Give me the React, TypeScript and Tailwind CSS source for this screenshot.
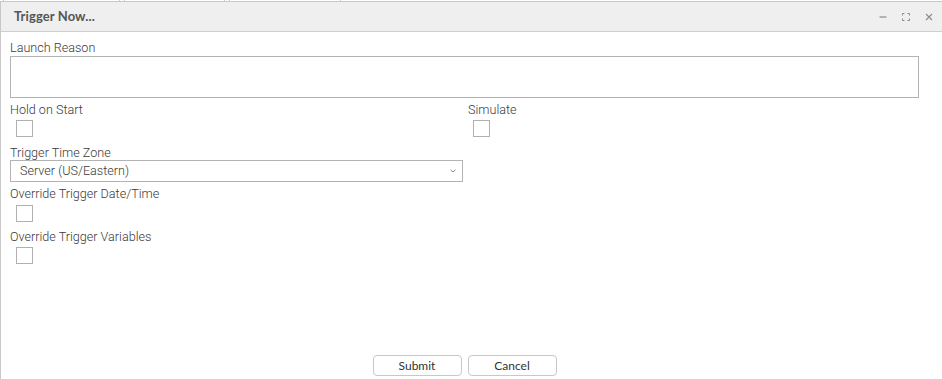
import React from "react";

const labelCls = "block text-[12.6px] leading-[14px] font-light text-[#3a3a3a]";

function Box() {
  return <div className="w-[17px] h-[17px] border border-[#b0b0b0] bg-white ml-[6px] mt-[3px]" />;
}

export default function App() {
  return (
    <div className="w-[942px] h-[379px] bg-white flex flex-col overflow-hidden" style={{ fontFamily: "Roboto, 'Liberation Sans', sans-serif" }}>
      {/* sliver of the page behind the dialog */}
      <div className="flex h-px bg-white">
        <div className="w-[4px] border-r border-[#ccc]" />
        <div className="w-[116px] border-r border-[#ccc]" />
        <div className="w-[5px] border-r border-[#ccc]" />
        <div className="w-[100px] border-r border-[#ccc]" />
        <div className="w-[5px] border-r border-[#ccc]" />
        <div className="w-[111px] border-r border-[#ccc]" />
      </div>

      <div className="flex-1 flex flex-col border-l border-t border-[#c8c8c8]">
        {/* Header */}
        <div className="h-[30px] bg-[#efefef] border-b border-[#cfcfcf] flex items-center pl-[13px] pr-[9px]">
          <span className="text-[13px] font-bold text-[#555] tracking-[0.1px]" style={{ fontFamily: "Lato, 'Liberation Sans', sans-serif" }}>
            Trigger Now...
          </span>
          <div className="ml-auto flex items-center gap-[15px] text-[#8a8a8a]">
            <svg width="8" height="8" viewBox="0 0 8 8"><path d="M0.5 4h7" stroke="currentColor" strokeWidth="1.2" /></svg>
            <svg width="8" height="8" viewBox="0 0 8 8" fill="none" stroke="currentColor" strokeWidth="1">
              <path d="M0.5 2.5v-2h2M5.5 0.5h2v2M7.5 5.5v2h-2M2.5 7.5h-2v-2" />
            </svg>
            <svg width="8" height="8" viewBox="0 0 8 8" stroke="currentColor" strokeWidth="1.1"><path d="M1 1l6 6M7 1l-6 6" /></svg>
          </div>
        </div>

        {/* Body */}
        <div className="flex-1 flex flex-col pl-[9px] pr-[23px] pt-[9px]">
          <label className={labelCls}>Launch Reason</label>
          <textarea className="block mt-[1px] h-[42px] w-full border border-[#b3b3b3] resize-none outline-none" />

          <div className="grid grid-cols-[453px_1fr] gap-[5px] mt-[5px]">
            <div>
              <label className={labelCls}>Hold on Start</label>
              <Box />
            </div>
            <div>
              <label className={labelCls}>Simulate</label>
              <div className="-ml-px"><Box /></div>
            </div>
          </div>

          <label className={`${labelCls} mt-[9px]`}>Trigger Time Zone</label>
          <div className="w-[453px] h-[22px] border border-[#b3b3b3] flex items-center pl-[9px] pr-[6px] text-[12.6px] font-light text-[#3a3a3a]">
            <span>Server (US/Eastern)</span>
            <svg className="ml-auto" width="6" height="4" viewBox="0 0 6 4" fill="none" stroke="#888" strokeWidth="1"><path d="M0.5 0.8l2.5 2.2 2.5-2.2" /></svg>
          </div>

          <label className={`${labelCls} mt-[5px]`}>Override Trigger Date/Time</label>
          <div className="mt-px"><Box /></div>

          <label className={`${labelCls} mt-[8px]`}>Override Trigger Variables</label>
          <Box />

          <div className="mt-auto mb-[3px] flex justify-center gap-[6px]">
            <button className="w-[89px] h-[21px] border border-[#c8c8c8] rounded-[4px] bg-white text-[12px] text-[#333]" style={{ fontFamily: "Lato, 'Liberation Sans', sans-serif" }}>
              Submit
            </button>
            <button className="w-[89px] h-[21px] border border-[#c8c8c8] rounded-[4px] bg-white text-[12px] text-[#333]" style={{ fontFamily: "Lato, 'Liberation Sans', sans-serif" }}>
              Cancel
            </button>
          </div>
        </div>
      </div>
    </div>
  );
}
